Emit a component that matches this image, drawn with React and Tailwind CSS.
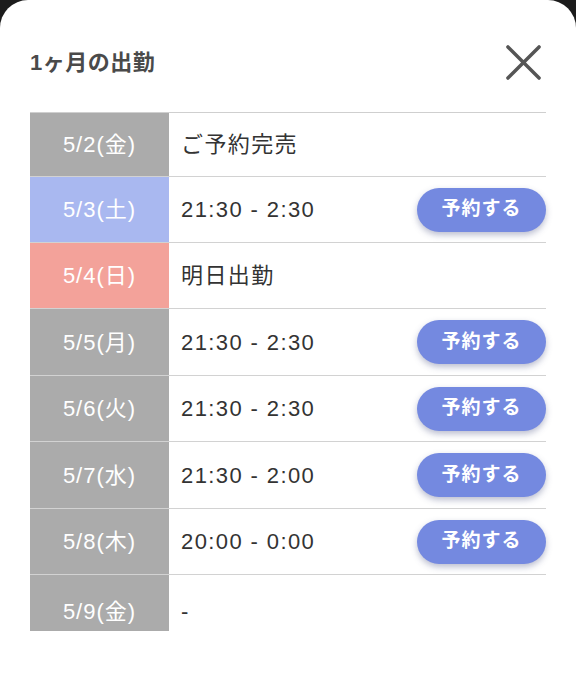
import React from "react";

const rows = [
  { date: "5/2(金)", tone: "bg-[#ababab]", text: "ご予約完売", h: "h-[64px]" },
  { date: "5/3(土)", tone: "bg-[#a9b8f0]", text: "21:30 - 2:30", reserve: true, h: "h-[66px]" },
  { date: "5/4(日)", tone: "bg-[#f3a29a]", text: "明日出勤", h: "h-[66px]" },
  { date: "5/5(月)", tone: "bg-[#ababab]", text: "21:30 - 2:30", reserve: true, h: "h-[67px]" },
  { date: "5/6(火)", tone: "bg-[#ababab]", text: "21:30 - 2:30", reserve: true, h: "h-[66px]" },
  { date: "5/7(水)", tone: "bg-[#ababab]", text: "21:30 - 2:00", reserve: true, h: "h-[67px]" },
  { date: "5/8(木)", tone: "bg-[#ababab]", text: "20:00 - 0:00", reserve: true, h: "h-[66px]" },
];

const font = "font-['Liberation_Sans','Noto_Sans_CJK_JP',sans-serif]";

const App = () => {
  return (
    <div className={`w-[576px] h-[674px] bg-[#1c1c1c] ${font}`}>
      <div className="h-full bg-white rounded-t-[28px] px-[30px] pt-[44px]">
        {/* header */}
        <div className="flex items-center justify-between h-[36px]">
          <h1 className="text-[22px] font-bold text-[#4a4a4a] tracking-[0.5px]">
            1ヶ月の出勤
          </h1>
          <button className="mr-[5px] text-[#555]">
            <svg width="35" height="35" viewBox="0 0 36 36">
              <path
                d="M2 2 L34 34 M34 2 L2 34"
                stroke="currentColor"
                strokeWidth="3.6"
                strokeLinecap="round"
              />
            </svg>
          </button>
        </div>

        {/* schedule */}
        <div className="mt-[32px] border-t border-[#cfcfcf]">
          {rows.map((r) => (
            <div key={r.date} className={`flex ${r.h} border-b border-[#d2d2d2]`}>
              <div
                className={`w-[139px] ${r.tone} flex items-center justify-center text-white text-[22px] tracking-[1px]`}
              >
                {r.date}
              </div>
              <div className="flex-1 flex items-center justify-between pl-[12px]">
                <span className="text-[22px] text-[#333] tracking-[1.4px]">{r.text}</span>
                {r.reserve && (
                  <button className="w-[129px] h-[44px] rounded-full bg-[#7489e0] text-white text-[19px] font-bold tracking-[1px] shadow-[0_3px_6px_rgba(60,70,120,0.35)]">
                    予約する
                  </button>
                )}
              </div>
            </div>
          ))}
          <div className="flex h-[56px]">
            <div className="w-[139px] bg-[#ababab] flex items-center justify-center pt-[16px] text-white text-[22px] tracking-[1px]">
              5/9(金)
            </div>
            <div className="flex-1 flex items-center pt-[16px] pl-[12px] text-[22px] text-[#333]">
              -
            </div>
          </div>
        </div>
      </div>
    </div>
  );
};

export default App;
